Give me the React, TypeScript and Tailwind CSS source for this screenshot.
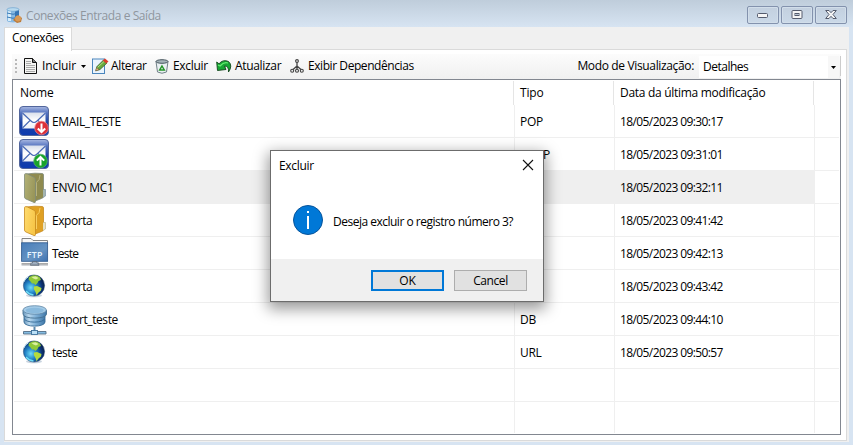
import React from "react";

type Kind = "down" | "up" | "folderSel" | "folder" | "ftp" | "globe" | "db";

const rows: { kind: Kind; name: string; type: string; date: string; nameCls: string }[] = [
  { kind: "down", name: "EMAIL_TESTE", type: "POP", date: "18/05/2023 09:30:17", nameCls: "tracking-[-0.38px]" },
  { kind: "up", name: "EMAIL", type: "SMTP", date: "18/05/2023 09:31:01", nameCls: "tracking-[-0.38px]" },
  { kind: "folderSel", name: "ENVIO MC1", type: "", date: "18/05/2023 09:32:11", nameCls: "tracking-[-0.25px]" },
  { kind: "folder", name: "Exporta", type: "", date: "18/05/2023 09:41:42", nameCls: "tracking-[-0.45px]" },
  { kind: "ftp", name: "Teste", type: "", date: "18/05/2023 09:42:13", nameCls: "tracking-[-0.75px]" },
  { kind: "globe", name: "Importa", type: "", date: "18/05/2023 09:43:42", nameCls: "tracking-[-0.55px]" },
  { kind: "db", name: "import_teste", type: "DB", date: "18/05/2023 09:44:10", nameCls: "tracking-[-0.42px]" },
  { kind: "globe", name: "teste", type: "URL", date: "18/05/2023 09:50:57", nameCls: "tracking-[-0.5px]" },
];

function Mail({ up }: { up?: boolean }) {
  const badge = up ? "#18a32b" : "#dc3038";
  return (
    <svg width="30" height="30" viewBox="0 0 30 30">
      <defs>
        <linearGradient id="mailBg" x1="0" y1="0" x2="0" y2="1">
          <stop offset="0" stopColor="#a9b9e2" />
          <stop offset="0.22" stopColor="#5674c0" />
          <stop offset="0.55" stopColor="#1c43a3" />
          <stop offset="1" stopColor="#0d3ab0" />
        </linearGradient>
        <linearGradient id="mailPaper" x1="0" y1="0" x2="0" y2="1">
          <stop offset="0" stopColor="#d9dfeb" />
          <stop offset="0.5" stopColor="#ffffff" />
          <stop offset="1" stopColor="#eef1f8" />
        </linearGradient>
      </defs>
      <rect x="0.5" y="0.5" width="29" height="29" rx="3.5" fill="url(#mailBg)" stroke="#52669c" />
      <rect x="3.5" y="6.5" width="23" height="16" fill="url(#mailPaper)" />
      <path d="M3.5 7 L12 15 Q15 18 18 15 L26.500 7 M3.500 22 L11 14.500 M26.500 22 L19 14.500" fill="none" stroke="#4768b4" strokeWidth="1.100" />
      <circle cx={up ? 21.500 : 22.500} cy="22" r="6.800" fill={badge} stroke={up ? "#5cb667" : "#ef8a8e"} strokeWidth="0.700" />
      {up ? (
        <path d="M21.500 26.500 V18.500 M17.800 21.600 L21.500 18 L25.200 21.600" fill="none" stroke="#fff" strokeWidth="2" />
      ) : (
        <path d="M22.500 17.500 V25.500 M18.800 22.500 L22.500 26.200 L26.200 22.500" fill="none" stroke="#fff" strokeWidth="2" />
      )}
    </svg>
  );
}

function Folder({ selected }: { selected?: boolean }) {
  const c = selected
    ? { a: "#b3b277", b: "#99965a", line: "#7f8a78", id: "fs" }
    : { a: "#ffdc70", b: "#f7c648", line: "#c68a20", id: "fn" };
  return (
    <svg width="24" height="32" viewBox="0 0 24 32">
      <defs>
        <linearGradient id={c.id} x1="0" y1="0" x2="1" y2="0.4">
          <stop offset="0" stopColor={c.a} />
          <stop offset="1" stopColor={c.b} />
        </linearGradient>
      </defs>
      <path d="M3 2 L12 1.200 L19 1.500 Q20.500 1.500 20.500 3 V24 Q20.500 26 18.500 26.500 L12 29 Z" fill={selected ? "#8f8b50" : "#dfa023"} stroke={c.line} strokeWidth="0.800" />
      <path d="M20 17.500 H22.500 V24 L20 25.500" fill={selected ? "#a4b5ae" : "#e6e3c9"} stroke={selected ? "#8194a5" : "#c1b78b"} strokeWidth="0.700" />
      <path d="M1.500 2.500 Q1.500 1.500 3 1.700 L4.500 2 L11.500 5.500 Q12.500 6.500 12.500 8 V29.500 Q12.500 31 11 30.500 L3 27 Q1.500 26.500 1.500 25 Z" fill={`url(#${c.id})`} stroke={c.line} strokeWidth="0.800" />
      <path d="M13.300 10.500 Q17 8.500 17 3 M13.500 24 V10.500" stroke={selected ? "#b9b681" : "#fbd466"} fill="none" strokeWidth="0.900" />
    </svg>
  );
}

function Ftp() {
  return (
    <svg width="28" height="30" viewBox="0 0 28 30">
      <defs>
        <linearGradient id="ftpBg" x1="0" y1="0" x2="1" y2="1">
          <stop offset="0" stopColor="#477dba" />
          <stop offset="0.6" stopColor="#6693c2" />
          <stop offset="1" stopColor="#3d71b1" />
        </linearGradient>
      </defs>
      <path d="M1 7 V1.500 H10 L12 3.500 H26.500 V7" fill="#f7f7f7" stroke="#777" strokeWidth="0.900" />
      <rect x="0.600" y="5.800" width="26" height="18.500" fill="url(#ftpBg)" stroke="#365f92" strokeWidth="0.900" />
      <text x="13.700" y="21" textAnchor="middle" fontFamily="Open Sans, sans-serif" fontSize="8.800" fontWeight="600" letterSpacing="0.300" fill="#e9f5ff">FTP</text>
      <path d="M11.500 24.500 H16 V26 H18 V28.300 H9.500 V26 H11.500 Z" fill="#9faebf" stroke="#4f5d6f" strokeWidth="0.700" />
      <path d="M0.500 26.800 H9.500 M18 26.800 H27" stroke="#a9a9a9" strokeWidth="1.600" />
      <path d="M0.500 28 H27" stroke="#6c747e" strokeWidth="0.600" />
    </svg>
  );
}

function Globe() {
  return (
    <svg width="24" height="24" viewBox="0 0 24 24">
      <defs>
        <radialGradient id="globeBg" cx="0.35" cy="0.6" r="0.65">
          <stop offset="0" stopColor="#6fdcf6" />
          <stop offset="0.4" stopColor="#2384c7" />
          <stop offset="0.8" stopColor="#0b3477" />
          <stop offset="1" stopColor="#092250" />
        </radialGradient>
      </defs>
      <ellipse cx="12" cy="21.500" rx="8" ry="1.800" fill="#c9d4df" />
      <circle cx="12" cy="11.500" r="10.600" fill="url(#globeBg)" stroke="#24496f" strokeWidth="0.500" />
      <path d="M7 3 L11 1.300 L15 1.600 L18 3.500 L19 6 L16.500 7 L15.500 9 L13.500 11 L12 9.500 L10 9.500 L8.500 7.500 L6.500 5.500 Z" fill="#8fc93a" />
      <path d="M9.500 3 L13.500 2.200 L16.500 4 L14 5.500 L11.500 4.500 Z" fill="#dcefa0" />
      <path d="M12 12.500 L15 12 L19.500 14 L19 16.500 L16.500 18.500 L14.500 21.300 L13.500 18 L11.800 15 Z" fill="#b4da3c" />
      <path d="M1.800 8 Q3 4.500 6.500 2.700" stroke="#c6e8f8" fill="none" />
      <path d="M4 17 Q7 20.500 11.500 21" stroke="#6fdcf5" fill="none" strokeWidth="1.300" />
    </svg>
  );
}

function Db() {
  return (
    <svg width="26" height="31" viewBox="0 0 26 31">
      <defs>
        <linearGradient id="dbBg" x1="0" y1="0" x2="1" y2="0">
          <stop offset="0" stopColor="#6695bb" />
          <stop offset="0.25" stopColor="#b9d8ee" />
          <stop offset="0.55" stopColor="#7fb0d7" />
          <stop offset="1" stopColor="#3e77a8" />
        </linearGradient>
      </defs>
      <path d="M12.500 22 V27" stroke="#5b88ad" strokeWidth="2" />
      <path d="M2 13.500 V17 C2 22.500 23 22.500 23 17 V13.500" fill="url(#dbBg)" stroke="#356b96" strokeWidth="0.900" />
      <path d="M2 9.500 V13 C2 18.500 23 18.500 23 13 V9.500" fill="url(#dbBg)" stroke="#356b96" strokeWidth="0.900" />
      <path d="M1 5 V9 C1 14.500 24.500 14.500 24.500 9 V5" fill="url(#dbBg)" stroke="#456f90" strokeWidth="0.900" />
      <ellipse cx="12.700" cy="5" rx="11.700" ry="4.300" fill="#a4cbe7" stroke="#5f87a6" strokeWidth="0.800" />
      <ellipse cx="12.700" cy="5.500" rx="9" ry="2.700" fill="#8abadd" />
      <path d="M1.500 26.500 H9.500 V29 H1.500 Z M15.500 26.500 H24 V29 H15.500 Z" fill="#84bce3" stroke="#546d84" strokeWidth="0.900" />
      <rect x="9.500" y="25.500" width="6" height="4" fill="#bce0f6" stroke="#3e719b" strokeWidth="0.900" />
    </svg>
  );
}

function RowIcon({ kind }: { kind: Kind }) {
  switch (kind) {
    case "down": return <span className="ml-[5px] mt-px"><Mail /></span>;
    case "up": return <span className="ml-[5px] mt-px"><Mail up /></span>;
    case "folderSel": return <span className="ml-[9px] mt-px"><Folder selected /></span>;
    case "folder": return <span className="ml-[9px] mt-px"><Folder /></span>;
    case "ftp": return <span className="ml-[7px]"><Ftp /></span>;
    case "globe": return <span className="ml-[8px] mt-1"><Globe /></span>;
    case "db": return <span className="ml-[8px] mt-[2px]"><Db /></span>;
  }
}

function Row({ r }: { r?: (typeof rows)[number] }) {
  const sel = r?.kind === "folderSel";
  return (
    <div className="flex h-[33px]">
      <div className="flex h-full w-[501px] border-r border-b border-[#efefef]">
        <div className="flex w-9 shrink-0 items-start">{r && <RowIcon kind={r.kind} />}</div>
        <div className={sel ? "-mb-px flex grow items-center bg-[#efefef] pt-px pl-[2px]" : r?.name === "Importa" ? "flex grow items-center pt-[2px] pl-px" : "flex grow items-center pt-[2px] pl-[2px]"}>
          <span className={r?.nameCls}>{r?.name}</span>
        </div>
      </div>
      <div className={sel ? "flex w-[100px] items-center border-r border-b border-[#efefef] bg-[#efefef] pt-[2px] pl-[5px]" : "flex w-[100px] items-center border-r border-b border-[#efefef] pt-[2px] pl-[5px]"}>
        <span className="tracking-[-0.3px]">{r?.type}</span>
      </div>
      <div className={sel ? "flex w-[200px] items-center border-r border-b border-[#efefef] bg-[#efefef] pt-[2px] pl-[5px]" : "flex w-[200px] items-center border-r border-b border-[#efefef] pt-[2px] pl-[5px]"}>
        <span className="tracking-[-0.6px]">{r?.date}</span>
      </div>
      <div className="w-6 border-b border-[#efefef]" />
    </div>
  );
}

function WinButton({ children }: { children: React.ReactNode }) {
  return (
    <div className="flex h-[18px] w-8 items-center justify-center rounded-[2px] border border-[#8392ad] bg-gradient-to-b from-[#c3d0df] to-[#cbd9e8] shadow-[inset_0_0_0_1px_#d2deea]">
      {children}
    </div>
  );
}

function Arrow() {
  return <svg width="5" height="3" viewBox="0 0 5 3" className="shrink-0"><path d="M0 0 H5 L2.500 3 Z" fill="#000" /></svg>;
}

export default function App() {
  return (
    <div className="relative h-[445px] w-[853px] overflow-hidden bg-[#d7e4f2] font-['Open_Sans','Noto_Sans',sans-serif] text-[12px] leading-4 whitespace-nowrap text-black">
      <header className="flex h-[27px] items-center bg-gradient-to-b from-[#bfcddb] to-[#d7e4f2] pr-[6px] pl-[6px]">
        <svg width="17" height="17" viewBox="0 0 17 17" className="mt-[3px]">
          <path d="M1 2.500 V13.500 C1 16 13 16 13 13.500 V2.500" fill="#86b9e4" />
          <path d="M9 3 H13 V14 H9 Z" fill="#3473b4" />
          <path d="M2 4 V14 H5 V4 Z" fill="#d6ecfa" />
          <path d="M1 6 Q7 8.500 13 6 M1 10 Q7 12.500 13 10" stroke="#3978b4" fill="none" />
          <ellipse cx="7" cy="2.500" rx="6" ry="1.800" fill="#b9daef" stroke="#6ca4ce" strokeWidth="0.700" />
          <path d="M7 13 L12 8 L16 11 L15 15 L11 16 Z" fill="#bb7a38" />
          <circle cx="12" cy="11.500" r="3" fill="#d99a56" />
        </svg>
        <span className="mt-[5px] ml-[3px] grow tracking-[-0.43px] text-[#8f969e]">Conexões Entrada e Saída</span>
        <div className="mt-[3px] flex gap-[2px]">
          <WinButton>
            <svg width="12" height="6" className="mt-[2px]"><rect x="0.500" y="0.500" width="10" height="4" rx="1" fill="#f5f5f5" stroke="#545b6c" /></svg>
          </WinButton>
          <WinButton>
            <svg width="12" height="10"><rect x="1" y="0.500" width="10" height="8" rx="1" fill="#f5f5f5" stroke="#545b6c" /><rect x="4" y="3.500" width="4" height="2" fill="#b8c4d2" stroke="#545b6c" /></svg>
          </WinButton>
          <WinButton>
            <svg width="12" height="10" viewBox="0 0 12 10"><path d="M0.700 0.500 H4 L6 2.700 L8 0.500 H11.300 L8 4.500 L11.300 8.500 H8 L6 6.300 L4 8.500 H0.700 L4 4.500 Z" fill="#f5f5f5" stroke="#545b6c" /></svg>
          </WinButton>
        </div>
      </header>

      <div className="ml-1 flex h-[415px] w-[845px] flex-col bg-[#f0f0f0]">
        <div className="flex h-[23px]">
          <div className="z-10 -mb-px h-6 w-[68px] border border-b-0 border-[#dadada] bg-white pt-[2px] pl-[7px] tracking-[-0.4px]">Conexões</div>
          <div className="mr-[2px] grow border-b border-[#dadada]" />
        </div>
        <div className="mr-[2px] h-[391px] border border-t-0 border-[#dadada] bg-white pr-[5px] pl-[7px] pt-1">
          <div className="flex h-[25px] items-center bg-gradient-to-b from-[#fcfcfc] to-[#f0f0f0] pb-px">
            <div className="ml-[3px] flex w-[2px] flex-col gap-[2px]">
              <i className="h-[2px] bg-[#b9b9b9]" /><i className="h-[2px] bg-[#b9b9b9]" /><i className="h-[2px] bg-[#b9b9b9]" /><i className="h-[2px] bg-[#b9b9b9]" />
            </div>
            <svg width="14" height="16" viewBox="0 0 14 16" className="ml-[7px]">
              <path d="M0.500 0.500 H8.500 L12.500 4.500 V15.500 H0.500 Z" fill="#f4f4f2" stroke="#111" />
              <path d="M8.500 0.500 V4.500 H12.500" fill="#777" stroke="#111" />
              <path d="M2 3.500 H7 M2 5.500 H7 M2 7.500 H11 M2 9.500 H11 M2 11.500 H11 M2 13.500 H11" stroke="#aaa" />
            </svg>
            <span className="ml-1 w-[34px] tracking-[-0.1px]">Incluir</span>
            <span className="ml-[5px] pt-px"><Arrow /></span>
            <svg width="17" height="16" viewBox="0 0 17 16" className="ml-[6px]">
              <rect x="0.500" y="1" width="12" height="14.500" fill="#eaf4fd" stroke="#4b86bd" />
              <path d="M4 12.500 L5 8.500 L11.500 2 L15 5 L8 11.500 Z" fill="#67a83c" stroke="#2e5420" strokeWidth="0.700" />
              <path d="M5.500 9.500 L12 3.500" stroke="#b8df87" />
              <path d="M10.800 2.500 L13 0.500 L16.500 3.500 L14.300 5.500 Z" fill="#dc3c2e" />
              <path d="M3.500 13 L4.600 9.500 L7.200 11.700 Z" fill="#efc083" stroke="#4b3a25" strokeWidth="0.500" />
            </svg>
            <span className="ml-[2px] w-[35px] tracking-[-0.35px]">Alterar</span>
            <svg width="14" height="15" viewBox="0 0 14 15" className="ml-[9px]">
              <path d="M1 2.500 L2.500 13 Q7 15.500 11.500 13 L13 2.500" fill="#e9f0f2" stroke="#718087" />
              <ellipse cx="7" cy="2.500" rx="6" ry="1.800" fill="#a5b3b9" stroke="#48575f" />
              <path d="M7 7 L9.300 11 H4.700 Z" fill="none" stroke="#259529" strokeWidth="1.500" />
            </svg>
            <span className="ml-1 w-[36px] tracking-[-0.3px]">Excluir</span>
            <svg width="16" height="13" viewBox="0 0 16 13" className="ml-[7px]">
              <path d="M0.700 2 L3 3.800 Q7 -1 12.500 1.500 Q17 5.500 12.500 12 Q13 6 8.500 6 L10 9.500 L1.500 10.500 Z" fill="#17a634" stroke="#12451b" strokeWidth="0.900" />
              <path d="M2 5 L4 6 Q8 1.500 12 3" fill="none" stroke="#66eb72" strokeWidth="1.300" />
            </svg>
            <span className="ml-[3px] w-[47px] tracking-[-0.32px]">Atualizar</span>
            <svg width="14" height="14" viewBox="0 0 14 14" className="ml-[8px]">
              <path d="M7 3 V8 M7 7 L2.500 11 M7 7 V11 M7 7 L11.500 11" stroke="#444" strokeWidth="1.300" />
              <g fill="#eee" stroke="#444" strokeWidth="1.100"><circle cx="7" cy="2" r="1.400" /><circle cx="2.200" cy="11.800" r="1.500" /><circle cx="7" cy="11.800" r="1.500" /><circle cx="11.800" cy="11.800" r="1.500" /></g>
            </svg>
            <span className="ml-1 grow tracking-[-0.43px]">Exibir Dependências</span>
            <span className="mr-[5px] tracking-[-0.35px]">Modo de Visualização:</span>
            <div className="mt-[2px] flex h-[22px] w-[140px] items-center bg-white pl-[4px]">
              <span className="grow tracking-[-0.5px]">Detalhes</span>
              <div className="flex h-full w-[11px] items-center justify-center bg-[#f7f7f7]"><Arrow /></div>
            </div>
            <div className="ml-[1px] h-5 w-px bg-[#ccc]" />
          </div>
          <div className="flex h-[356px] w-[829px] flex-col border border-[#828790] bg-white pl-px">
            <div className="mt-px flex h-6 pl-[6px] pt-1">
              <div className="-mt-1 w-[494px] border-r border-[#e5e5e5] pt-1 tracking-[-0.15px]">Nome</div>
              <div className="-mt-1 w-[100px] border-r border-[#e5e5e5] pt-1 pl-[6px] tracking-[-0.2px]">Tipo</div>
              <div className="-mt-1 w-[200px] border-r border-[#e5e5e5] pt-1 pl-[6px] tracking-[-0.29px]">Data da última modificação</div>
            </div>
            {rows.map((r) => <Row key={r.date} r={r} />)}
            <Row />
            <div className="flex h-[31px]">
              <div className="w-[501px] border-r border-[#efefef]" />
              <div className="w-[100px] border-r border-[#efefef]" />
              <div className="w-[200px] border-r border-[#efefef]" />
            </div>
          </div>
        </div>
      </div>

      <div className="absolute top-[150px] left-[270px] flex h-[152px] w-[274px] flex-col border border-[#6c6c6c] bg-white shadow-[0_5px_14px_2px_rgba(0,0,0,0.4)]" role="dialog">
        <div className="flex h-[30px] items-center justify-between pr-[9px] pl-2">
          <span className="tracking-[-0.3px]">Excluir</span>
          <svg width="12" height="12" viewBox="0 0 12 12" className="-mt-[2px]"><path d="M1 1 L11 11 M11 1 L1 11" stroke="#111" strokeWidth="1.100" /></svg>
        </div>
        <div className="flex grow items-center pl-[22px]">
          <div className="flex size-[30px] items-center justify-center rounded-full border border-[#07549b] bg-[#0078d7]">
            <svg width="4" height="18" viewBox="0 0 4 18"><path d="M1 0 H3 V2 H1 Z M1 5 H3 V18 H1 Z" fill="#fff" /></svg>
          </div>
          <span className="ml-[10px] pt-[3px] tracking-[-0.5px]">Deseja excluir o registro número 3?</span>
        </div>
        <div className="flex h-[42px] items-center justify-end gap-[10px] bg-[#f0f0f0] pr-4">
          <div className="flex h-[21px] w-[73px] items-center justify-center border-2 border-[#0078d7] bg-[#e1e1e1] pt-[2px]">OK</div>
          <div className="flex h-[21px] w-[73px] items-center justify-center border border-[#adadad] bg-[#e1e1e1] pt-[2px] tracking-[-0.4px]">Cancel</div>
        </div>
      </div>
    </div>
  );
}
